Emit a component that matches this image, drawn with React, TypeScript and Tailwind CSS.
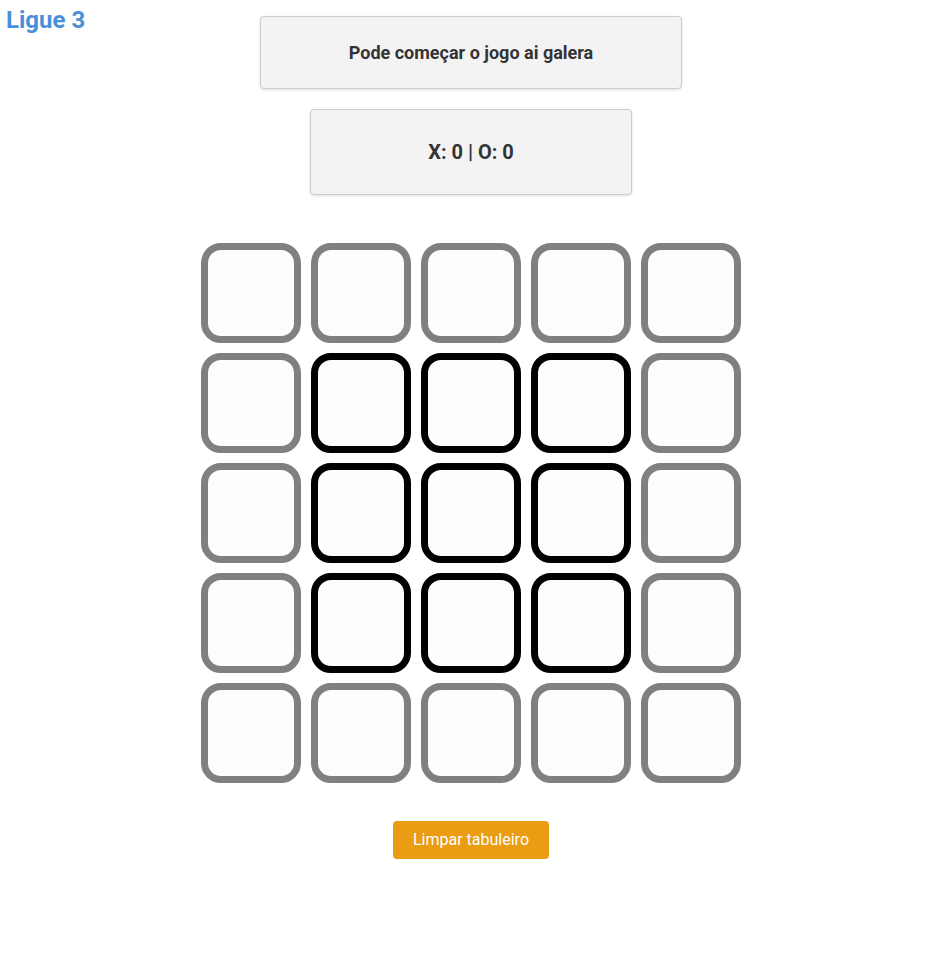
const inner = (r: number, c: number) => r >= 1 && r <= 3 && c >= 1 && c <= 3;

export default function App() {
  const rows = [0, 1, 2, 3, 4];
  return (
    <div className="min-h-[958px] bg-white font-['Roboto',sans-serif] text-[#333]">
      <div className="grid grid-cols-[1fr_auto_1fr]">
        <h1 className="pl-[6px] pt-[6px] text-[24px] font-bold leading-[28px] text-[#4a90d9]">Ligue 3</h1>
        <div className="flex flex-col items-center gap-5 pt-4">
          <div className="flex h-[73px] w-[422px] items-center justify-center rounded border border-[#cccccc] bg-[#f3f3f3] shadow-[0_1px_3px_rgba(0,0,0,0.12)]">
            <p className="text-[18px] font-bold">Pode começar o jogo ai galera</p>
          </div>
          <div className="flex h-[86px] w-[322px] items-center justify-center rounded border border-[#cccccc] bg-[#f3f3f3] shadow-[0_1px_3px_rgba(0,0,0,0.12)]">
            <p className="text-[20px] font-bold">X: 0 | O: 0</p>
          </div>
        </div>
        <div />
      </div>

      <div className="mt-12 flex flex-col items-center">
        <div className="grid grid-cols-[repeat(5,100px)] gap-[10px]">
          {rows.map((r) =>
            rows.map((c) => (
              <button
                key={`${r}-${c}`}
                className={`h-[100px] w-[100px] rounded-[20px] border-[7px] bg-[#fdfdfd] ${
                  inner(r, c) ? "border-black" : "border-[#808080]"
                }`}
              />
            ))
          )}
        </div>

        <button className="mt-[38px] h-[38px] w-[156px] rounded bg-[#ea9c12] text-[16px] text-white">
          Limpar tabuleiro
        </button>
      </div>
    </div>
  );
}
